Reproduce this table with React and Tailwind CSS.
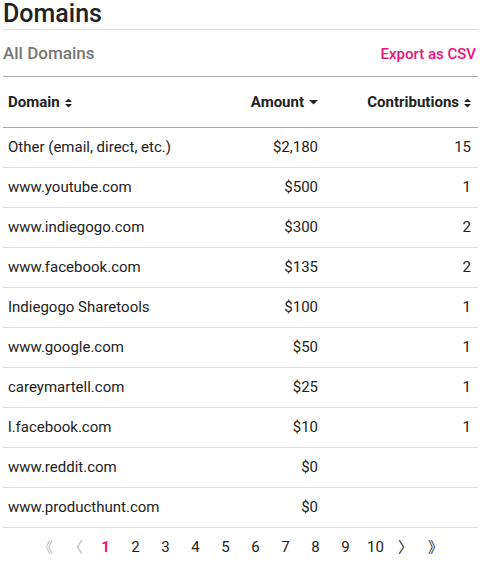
const rows = [
  { domain: "Other (email, direct, etc.)", amount: "$2,180", count: "15" },
  { domain: "www.youtube.com", amount: "$500", count: "1" },
  { domain: "www.indiegogo.com", amount: "$300", count: "2" },
  { domain: "www.facebook.com", amount: "$135", count: "2" },
  { domain: "Indiegogo Sharetools", amount: "$100", count: "1" },
  { domain: "www.google.com", amount: "$50", count: "1" },
  { domain: "careymartell.com", amount: "$25", count: "1" },
  { domain: "l.facebook.com", amount: "$10", count: "1" },
  { domain: "www.reddit.com", amount: "$0", count: "" },
  { domain: "www.producthunt.com", amount: "$0", count: "" },
];

const SortBoth = () => (
  <svg width="7" height="10" viewBox="0 0 7 10" className="ml-[5px] inline-block">
    <path d="M3.5 0.5 L7 4 L0 4 Z M0 6 L7 6 L3.5 9.5 Z" fill="#222" />
  </svg>
);

const SortDown = () => (
  <svg width="9" height="5" viewBox="0 0 9 5" className="ml-[5px] inline-block">
    <path d="M0 0 L9 0 L4.5 4.5 Z" fill="#222" />
  </svg>
);

const App = () => {
  const pages = [1, 2, 3, 4, 5, 6, 7, 8, 9, 10];

  return (
    <main className="w-[483px] bg-white px-[3px] font-['Roboto',sans-serif] text-[#222]">
      <div className="w-[475px]">
        <h1 className="h-[30px] border-b border-[#ddd] text-[25px] font-medium leading-[27px]">Domains</h1>
        <div className="flex h-[47px] items-center justify-between border-b border-[#a8a8a8]">
          <h2 className="pt-[2px] text-[17px] font-medium text-[#777]">All Domains</h2>
          <a href="#" className="pt-[2px] pr-[2px] text-[15px] font-medium text-[#eb1478]">
            Export as CSV
          </a>
        </div>

        <table className="w-full border-collapse text-[15px]">
          <thead>
            <tr className="h-[50px] border-b border-[#a8a8a8] text-left font-bold">
              <th className="pl-[5px]">
                Domain
                <SortBoth />
              </th>
              <th className="w-[150px] pr-[6px] text-right">
                Amount
                <SortDown />
              </th>
              <th className="w-[154px] pr-[7px] text-right">
                Contributions
                <SortBoth />
              </th>
            </tr>
          </thead>
          <tbody>
            {rows.map((row) => (
              <tr key={row.domain} className="h-[40px] border-b border-[#ddd]">
                <td className="pl-[5px]">{row.domain}</td>
                <td className="pr-[6px] text-right">{row.amount}</td>
                <td className="pr-[7px] text-right">{row.count}</td>
              </tr>
            ))}
          </tbody>
        </table>

        <nav className="flex h-[40px] items-center justify-center text-[15px]">
          <span className="w-[30px] text-center font-['Noto_Sans_CJK_SC',sans-serif] text-[#bbb]">《</span>
          <span className="w-[30px] text-center font-['Noto_Sans_CJK_SC',sans-serif] text-[#bbb]">〈</span>
          {pages.map((page) => (
            <a
              key={page}
              href="#"
              className={page === 1 ? "w-[30px] text-center font-bold text-[#eb1478]" : "w-[30px] text-center"}
            >
              {page}
            </a>
          ))}
          <a href="#" className="w-[30px] text-center font-['Noto_Sans_CJK_SC',sans-serif]">〉</a>
          <a href="#" className="w-[30px] text-center font-['Noto_Sans_CJK_SC',sans-serif]">》</a>
        </nav>
      </div>
    </main>
  );
};

export default App;
